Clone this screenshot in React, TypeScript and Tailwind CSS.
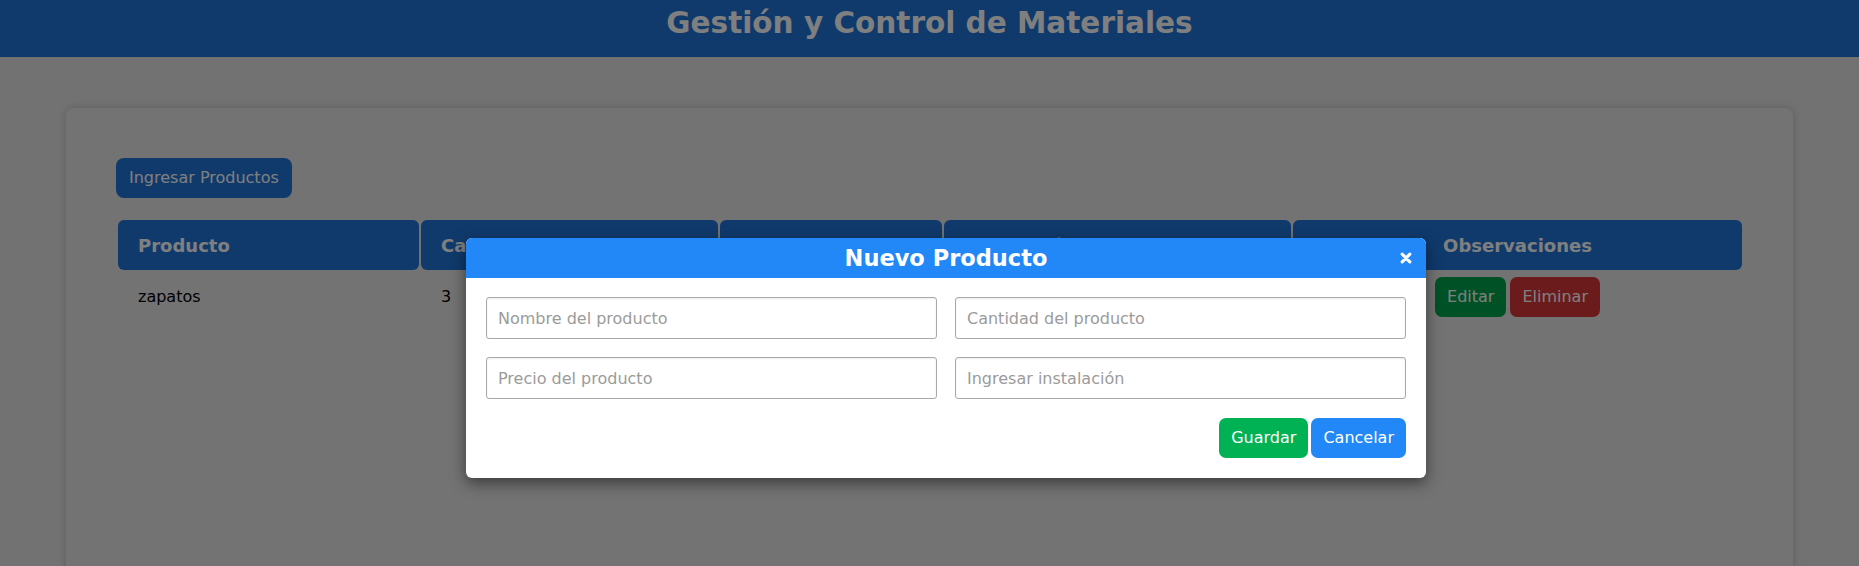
import React from "react";

export default function App() {
  return (
    <div className="relative h-[566px] overflow-hidden bg-[#e5e5e5] font-['DejaVu_Sans',sans-serif]">
      <header className="h-[57px] bg-[#2074d8] text-center">
        <h1 className="pt-[5px] text-[29.5px] font-bold leading-[36px] text-white">
          Gestión y Control de Materiales
        </h1>
      </header>

      <main className="mx-[66px] mt-[51px] h-[540px] rounded-lg bg-[#e6e6e6] p-[50px] shadow-[0_0_10px_rgba(0,0,0,0.18)]">
        <button className="h-10 rounded-lg bg-[#2074d8] px-[13px] text-base text-white">
          Ingresar Productos
        </button>
        <table className="mt-5 w-full table-fixed border-separate border-spacing-[2px]">
          <thead>
            <tr>
              <th className="h-[50px] w-[301px] rounded-md bg-[#2074d8] px-5 text-left text-[18px] font-bold text-white">
                Producto
              </th>
              <th className="h-[50px] w-[297px] rounded-md bg-[#2074d8] px-5 text-left text-[18px] font-bold text-white">
                Cantidad
              </th>
              <th className="h-[50px] w-[222px] rounded-md bg-[#2074d8] px-5 text-left text-[18px] font-bold text-white">
                Precio
              </th>
              <th className="h-[50px] w-[347px] rounded-md bg-[#2074d8] px-5 text-left text-[18px] font-bold text-white">
                Instalación
              </th>
              <th className="h-[50px] w-[449px] rounded-md bg-[#2074d8] px-5 text-center text-[18px] font-bold text-white">
                Observaciones
              </th>
            </tr>
          </thead>
          <tbody>
            <tr>
              <td className="h-[50px] px-5 text-base text-black">zapatos</td>
              <td className="h-[50px] px-5 text-base text-black">3</td>
              <td className="h-[50px] px-5 text-base text-black">20</td>
              <td className="h-[50px] px-5 text-base text-black">Bodega</td>
              <td className="h-[50px] px-5">
                <div className="flex justify-center gap-1">
                  <button className="h-10 rounded-[7px] bg-[#00a44c] px-3 text-base text-white">
                    Editar
                  </button>
                  <button className="h-10 rounded-[7px] bg-[#d63636] px-3 text-base text-white">
                    Eliminar
                  </button>
                </div>
              </td>
            </tr>
          </tbody>
        </table>
      </main>

      <div className="absolute inset-0 z-10 bg-black/50" />

      <div className="absolute left-[466px] top-[238px] z-20 w-[960px] rounded-md bg-white shadow-[0_5px_15px_rgba(0,0,0,0.5)]">
        <div className="relative flex h-10 items-center justify-center rounded-t-md bg-[#2287f7]">
          <h2 className="text-[22.5px] font-bold leading-none text-white">Nuevo Producto</h2>
          <button className="absolute right-[14px] top-1/2 -translate-y-1/2" aria-label="Cerrar">
            <svg width="12" height="12" viewBox="0 0 12 12" className="block">
              <path
                d="M2.2 2.2 L9.8 9.8 M9.8 2.2 L2.2 9.8"
                stroke="white"
                strokeWidth="3.2"
                strokeLinecap="round"
              />
            </svg>
          </button>
        </div>
        <div className="px-5 pb-5 pt-[19px]">
          <div className="grid grid-cols-2 gap-[18px]">
            <input
              className="h-[42px] w-full rounded-[3px] border border-[#a9a9a9] px-[11px] text-base text-black shadow-[inset_0_1px_2px_rgba(0,0,0,0.08)] outline-none placeholder:text-[#9b9b9b]"
              placeholder="Nombre del producto"
            />
            <input
              className="h-[42px] w-full rounded-[3px] border border-[#a9a9a9] px-[11px] text-base text-black shadow-[inset_0_1px_2px_rgba(0,0,0,0.08)] outline-none placeholder:text-[#9b9b9b]"
              placeholder="Cantidad del producto"
            />
            <input
              className="h-[42px] w-full rounded-[3px] border border-[#a9a9a9] px-[11px] text-base text-black shadow-[inset_0_1px_2px_rgba(0,0,0,0.08)] outline-none placeholder:text-[#9b9b9b]"
              placeholder="Precio del producto"
            />
            <input
              className="h-[42px] w-full rounded-[3px] border border-[#a9a9a9] px-[11px] text-base text-black shadow-[inset_0_1px_2px_rgba(0,0,0,0.08)] outline-none placeholder:text-[#9b9b9b]"
              placeholder="Ingresar instalación"
            />
          </div>
          <div className="mt-[19px] flex justify-end gap-[3px]">
            <button className="h-10 rounded-[7px] bg-[#00b254] px-3 text-base text-white">
              Guardar
            </button>
            <button className="h-10 rounded-[7px] bg-[#2287f7] px-3 text-base text-white">
              Cancelar
            </button>
          </div>
        </div>
      </div>
    </div>
  );
}
